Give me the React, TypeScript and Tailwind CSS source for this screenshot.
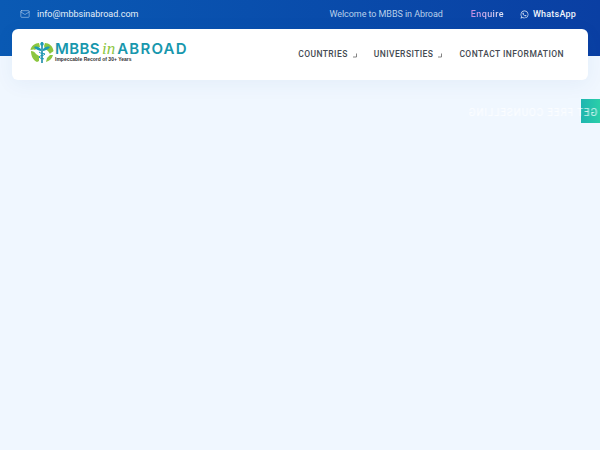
import React from "react";
import { Mail } from "lucide-react";
import { FaWhatsapp } from "react-icons/fa";

function Logo() {
  return (
    <div className="flex items-start mb-[5px]">
      <svg width="24" height="23" viewBox="0 0 24 23">
        <path d="M9 2 C5 2 1 5 0.5 9 C2 9 3 8 5 9 L7 7 L10 6 Z" fill="#8cc63f" />
        <path d="M15 2 C19 2 23 5 23.5 10 C22 12 21 11 20 13 L18 10 L15 8 L14 5 Z" fill="#8cc63f" />
        <path d="M1 10 C3 10 5 11 6 13 L9 15 L9 20 L7 21 C3 19 1 15 1 10 Z" fill="#8cc63f" />
        <path d="M20 14 L23 14 C22 18 19 20 16 21 L17 17 Z" fill="#8cc63f" />
        <path d="M4 6 C7 5 9 6 11 8 L11 10 C8 9 6 9 4 6 Z" fill="#1b9bb5" />
        <path d="M20 6 C17 5 15 6 13 8 L13 10 C16 9 18 9 20 6 Z" fill="#1b9bb5" />
        <rect x="11.2" y="1" width="1.6" height="21" fill="#1b8aa8" />
        <circle cx="12" cy="3" r="1.8" fill="#1b9bb5" />
        <path d="M9 11 C11 13 14 12 15 13 C14 15 10 14 9 16 C10 18 13 17 14 18" stroke="#1b9bb5" strokeWidth="1" fill="none" />
      </svg>
      <div className="flex flex-col leading-none ml-[1px] mt-[1px]">
        <div className="flex items-baseline h-[13px] text-[15px] font-semibold text-[#1797ad] leading-[13px] font-['Inter',sans-serif]">
          <span className="tracking-[0.4px]">MBBS</span>
          <span className="font-['Liberation_Serif',serif] italic font-normal text-[#8cc63f] text-[17px] leading-[13px] mx-[2px]">in</span>
          <span className="tracking-[1.2px]">ABROAD</span>
        </div>
        <span className="text-[5px] leading-[5px] font-bold text-[#333333] mt-[2px] font-['Liberation_Sans',sans-serif]">Impeccable Record of 30+ Years</span>
      </div>
    </div>
  );
}

function Caret() {
  return (
    <svg width="5" height="5" viewBox="0 0 5 5" className="mt-[3px]">
      <path d="M4.5 0.5 V4 H1" stroke="#666" strokeWidth="0.8" fill="none" />
    </svg>
  );
}

export default function App() {
  return (
    <div className="relative w-[600px] h-[450px] overflow-hidden bg-[#f0f7ff] font-['Roboto',sans-serif]">
      <div className="h-[56px] bg-gradient-to-r from-[#0a5ab4] to-[#0a3fa3]">
        <div className="flex items-center h-[29px] pl-[20px] pr-[24px] text-[9px]">
          <Mail size={10} strokeWidth={1.25} className="text-[#cfe2f5] mb-[1px]" />
          <span className="ml-[7px] whitespace-nowrap text-[#e6f0fa]">info@mbbsinabroad.com</span>
          <span className="ml-auto whitespace-nowrap text-[#b8d0ea] tracking-[-0.06px]">Welcome to MBBS in Abroad</span>
          <span className="ml-[28px] font-medium tracking-[0.4px] bg-gradient-to-r from-[#c58ae0] to-[#e8eef8] bg-clip-text text-transparent">Enquire</span>
          <FaWhatsapp size={9} className="ml-[16px] mb-[1px] text-[#e6f0fa]" />
          <span className="ml-[4px] font-medium text-[#eef4fb] tracking-[0.2px]">WhatsApp</span>
        </div>
      </div>
      <div className="absolute left-[12px] top-[29px] w-[576px] h-[51px] bg-white rounded-[6px] flex items-center pl-[18px] pr-[24px] shadow-[0_4px_20px_rgba(30,80,160,0.06)]">
        <Logo />
        <nav className="ml-auto flex items-center text-[8.5px] font-medium text-[#444a52] tracking-[0.42px] mt-[-1px]">
          <span>COUNTRIES</span>
          <span className="ml-[4px]"><Caret /></span>
          <span className="ml-[17px]">UNIVERSITIES</span>
          <span className="ml-[4px]"><Caret /></span>
          <span className="ml-[17px]">CONTACT INFORMATION</span>
        </nav>
      </div>
      <div className="absolute right-0 top-[99px] w-[19px] h-[24px] bg-gradient-to-r from-[#1fb5b0] to-[#2bcfa8]" />
      <div className="absolute right-[3px] top-[106px] whitespace-nowrap text-[10px] leading-[13px] tracking-[0.85px] text-white/80 antialiased [will-change:transform] [transform:scaleX(-1)]">
        GET FREE COUNSELLING
      </div>
    </div>
  );
}
